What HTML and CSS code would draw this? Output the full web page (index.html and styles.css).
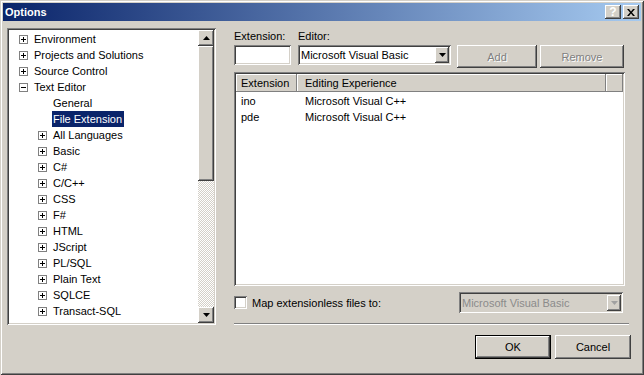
FILE: index.html
```html
<!DOCTYPE html>
<html lang="en">
<head>
<meta charset="UTF-8">
<title>Options</title>
<link rel="stylesheet" href="styles.css">
</head>
<body>
  <div class="window">
    <!-- title bar -->
    <div class="titlebar">
      <span class="title">Options</span>
      <div class="caption-btns">
        <button class="cap raised">?</button>
        <button class="cap raised">
          <svg width="8" height="7" viewBox="0 0 8 7"><path d="M0 0h2l2 2.5L6 0h2L5 3.5 8 7H6L4 4.5 2 7H0l3-3.5z" fill="#000"/></svg>
        </button>
      </div>
    </div>

    <div class="client">
      <!-- left tree -->
      <div class="tree sunken">
        <ul class="tree-items">
          <li class="node lv0"><span class="exp"></span><span class="label">Environment</span></li>
          <li class="node lv0"><span class="exp"></span><span class="label">Projects and Solutions</span></li>
          <li class="node lv0"><span class="exp"></span><span class="label">Source Control</span></li>
          <li class="node lv0"><span class="exp open"></span><span class="label">Text Editor</span></li>
          <li class="node lv1 leaf"><span class="label">General</span></li>
          <li class="node lv1 leaf"><span class="label selected">File Extension</span></li>
          <li class="node lv1"><span class="exp"></span><span class="label">All Languages</span></li>
          <li class="node lv1"><span class="exp"></span><span class="label">Basic</span></li>
          <li class="node lv1"><span class="exp"></span><span class="label">C#</span></li>
          <li class="node lv1"><span class="exp"></span><span class="label">C/C++</span></li>
          <li class="node lv1"><span class="exp"></span><span class="label">CSS</span></li>
          <li class="node lv1"><span class="exp"></span><span class="label">F#</span></li>
          <li class="node lv1"><span class="exp"></span><span class="label">HTML</span></li>
          <li class="node lv1"><span class="exp"></span><span class="label">JScript</span></li>
          <li class="node lv1"><span class="exp"></span><span class="label">PL/SQL</span></li>
          <li class="node lv1"><span class="exp"></span><span class="label">Plain Text</span></li>
          <li class="node lv1"><span class="exp"></span><span class="label">SQLCE</span></li>
          <li class="node lv1"><span class="exp"></span><span class="label">Transact-SQL</span></li>
        </ul>
        <div class="vscroll">
          <div class="sb-btn raised">
            <svg width="7" height="4" viewBox="0 0 7 4"><path d="M3.5 0L7 4H0z" fill="#000"/></svg>
          </div>
          <div class="sb-thumb raised"></div>
          <div class="sb-track"></div>
          <div class="sb-btn raised">
            <svg width="7" height="4" viewBox="0 0 7 4"><path d="M0 0h7L3.5 4z" fill="#000"/></svg>
          </div>
        </div>
      </div>

      <!-- right panel -->
      <div class="panel">
        <div class="row labels">
          <span class="lbl-ext">Extension:</span>
          <span>Editor:</span>
        </div>

        <div class="row controls">
          <div class="field ext-input sunken"></div>
          <div class="combo editor-combo sunken">
            <span class="combo-text">Microsoft Visual Basic</span>
            <span class="combo-btn raised">
              <svg width="7" height="4" viewBox="0 0 7 4"><path d="M0 0h7L3.5 4z" fill="#000"/></svg>
            </span>
          </div>
          <button class="btn raised disabled btn-add">Add</button>
          <button class="btn raised disabled btn-remove">Remove</button>
        </div>

        <div class="listview sunken">
          <div class="lv-head">
            <span class="col col-ext">Extension</span>
            <span class="col col-exp">Editing Experience</span>
            <span class="col col-rest"></span>
          </div>
          <div class="lv-row"><span class="col-ext">ino</span><span>Microsoft Visual C++</span></div>
          <div class="lv-row"><span class="col-ext">pde</span><span>Microsoft Visual C++</span></div>
        </div>

        <div class="row map">
          <span class="checkbox sunken"></span>
          <span class="map-label">Map extensionless files to:</span>
          <div class="combo map-combo sunken">
            <span class="combo-text">Microsoft Visual Basic</span>
            <span class="combo-btn raised">
              <svg width="7" height="4" viewBox="0 0 7 4"><path d="M0 0h7L3.5 4z" fill="#a0a0a0"/></svg>
            </span>
          </div>
        </div>

        <div class="sep"></div>

        <div class="row actions">
          <button class="btn raised default">OK</button>
          <button class="btn raised">Cancel</button>
        </div>
      </div>
    </div>
  </div>
</body>
</html>
```

FILE: styles.css
```css
* {
  box-sizing: border-box;
}

body {
  margin: 0;
  font-family: "Liberation Sans", Arial, sans-serif;
  font-size: 11px;
  color: #000;
  background: #d4d0c8;
}

/* classic 3d borders */
.raised {
  box-shadow: inset -1px -1px #404040, inset 1px 1px #fff, inset -2px -2px #808080, inset 2px 2px #d4d0c8;
}

.sunken {
  box-shadow: inset 1px 1px #808080, inset -1px -1px #fff, inset 2px 2px #404040, inset -2px -2px #d4d0c8;
}

button {
  font: inherit;
  color: inherit;
  border: 0;
  padding: 0;
  margin: 0;
  background: #d4d0c8;
}

.window {
  width: 644px;
  height: 375px;
  padding: 3px;
  background: #d4d0c8;
  box-shadow: inset 1px 1px #d4d0c8, inset -1px -1px #404040, inset 2px 2px #fff, inset -2px -2px #808080;
  display: flex;
  flex-direction: column;
}

.titlebar {
  height: 18px;
  flex: none;
  display: flex;
  align-items: center;
  padding-left: 2px;
  background: linear-gradient(to right, #0a246a, #a6caf0);
  color: #fff;
  font-weight: bold;
}

.title {
  flex: 1;
}

.caption-btns {
  display: flex;
  gap: 2px;
  margin-right: 2px;
}

.cap {
  width: 16px;
  height: 14px;
  display: flex;
  align-items: center;
  justify-content: center;
  font-weight: bold;
  font-size: 12px;
  line-height: 14px;
}

.client {
  flex: 1;
  display: flex;
  padding: 7px 0 0 4px;
}

/* tree view */
.tree {
  width: 209px;
  height: 297px;
  padding: 2px;
  background: #fff;
  display: flex;
}

.tree-items {
  flex: 1;
  list-style: none;
  margin: 0;
  padding: 1px 0 0 0;
  overflow: hidden;
}

.node {
  display: flex;
  align-items: center;
  height: 16px;
  white-space: nowrap;
}

.node.lv0 {
  padding-left: 10px;
}

.node.lv1 {
  padding-left: 29px;
}

.node.lv1.leaf {
  padding-left: 43px;
}

.exp {
  width: 9px;
  height: 9px;
  flex: none;
  margin-right: 5px;
  border: 1px solid #808080;
  background:
    linear-gradient(#000, #000) center / 5px 1px no-repeat,
    linear-gradient(#000, #000) center / 1px 5px no-repeat,
    #fff;
}

.exp.open {
  background:
    linear-gradient(#000, #000) center / 5px 1px no-repeat,
    #fff;
}

.label {
  padding: 0 2px 0 1px;
  line-height: 16px;
}

.label.selected {
  background: #0a246a;
  color: #fff;
}

.vscroll {
  width: 16px;
  flex: none;
  display: flex;
  flex-direction: column;
}

.sb-btn {
  height: 16px;
  flex: none;
  display: flex;
  align-items: center;
  justify-content: center;
  background: #d4d0c8;
}

.sb-thumb {
  height: 135px;
  flex: none;
  background: #d4d0c8;
}

.sb-track {
  flex: 1;
  background: repeating-conic-gradient(#fff 0 25%, #d4d0c8 0 50%) 0 0 / 2px 2px;
}

/* right side */
.panel {
  width: 397px;
  margin-left: 18px;
  display: flex;
  flex-direction: column;
}

.row {
  display: flex;
  align-items: center;
}

.labels {
  height: 17px;
  line-height: 17px;
}

.lbl-ext {
  width: 64px;
}

.controls {
  height: 23px;
  align-items: flex-start;
}

.field {
  background: #fff;
}

.ext-input {
  width: 57px;
  height: 20px;
  margin-right: 7px;
}

.combo {
  height: 20px;
  padding: 2px;
  display: flex;
  align-items: center;
  background: #fff;
}

.combo-text {
  flex: 1;
  padding-left: 1px;
  white-space: nowrap;
  overflow: hidden;
}

.combo-btn {
  width: 14px;
  height: 16px;
  flex: none;
  display: flex;
  align-items: center;
  justify-content: center;
  background: #d4d0c8;
}

.editor-combo {
  width: 153px;
}

.btn {
  height: 23px;
  display: flex;
  align-items: center;
  justify-content: center;
}

.btn-add {
  width: 80px;
  margin-left: 6px;
}

.btn-remove {
  width: 84px;
  margin-left: 3px;
}

.btn.disabled {
  color: #808080;
  text-shadow: 1px 1px #fff;
}

/* list view */
.listview {
  width: 391px;
  height: 214px;
  margin-top: 4px;
  padding: 2px;
  background: #fff;
}

.lv-head {
  display: flex;
  height: 18px;
  background: #d4d0c8;
}

.lv-head .col {
  height: 18px;
  line-height: 19px;
  padding-left: 5px;
  box-shadow: inset -1px -1px #808080, inset 1px 1px #fff;
  white-space: nowrap;
}

.lv-head .col-ext {
  width: 61px;
}

.lv-head .col-exp {
  width: 309px;
  padding-left: 8px;
}

.lv-head .col-rest {
  flex: 1;
}

.lv-row {
  display: flex;
  height: 16px;
  line-height: 18px;
  padding-left: 5px;
}

.lv-row .col-ext {
  width: 64px;
}

/* map extensionless */
.map {
  height: 21px;
  margin-top: 6px;
}

.checkbox {
  width: 13px;
  height: 13px;
  background: #fff;
  margin-right: 5px;
}

.map-label {
  flex: 1;
}

.map-combo {
  width: 164px;
  height: 21px;
  margin-right: 8px;
  background: #d4d0c8;
  color: #8b8b8b;
}

.sep {
  width: 395px;
  height: 2px;
  margin-top: 10px;
  border-top: 1px solid #808080;
  border-bottom: 1px solid #fff;
}

.actions {
  margin-top: 10px;
  justify-content: flex-end;
  gap: 4px;
}

.actions .btn {
  width: 76px;
  height: 24px;
}

.btn.default {
  box-shadow: inset 0 0 0 1px #000, inset -2px -2px #404040, inset 2px 2px #fff, inset -3px -3px #808080;
}
```
